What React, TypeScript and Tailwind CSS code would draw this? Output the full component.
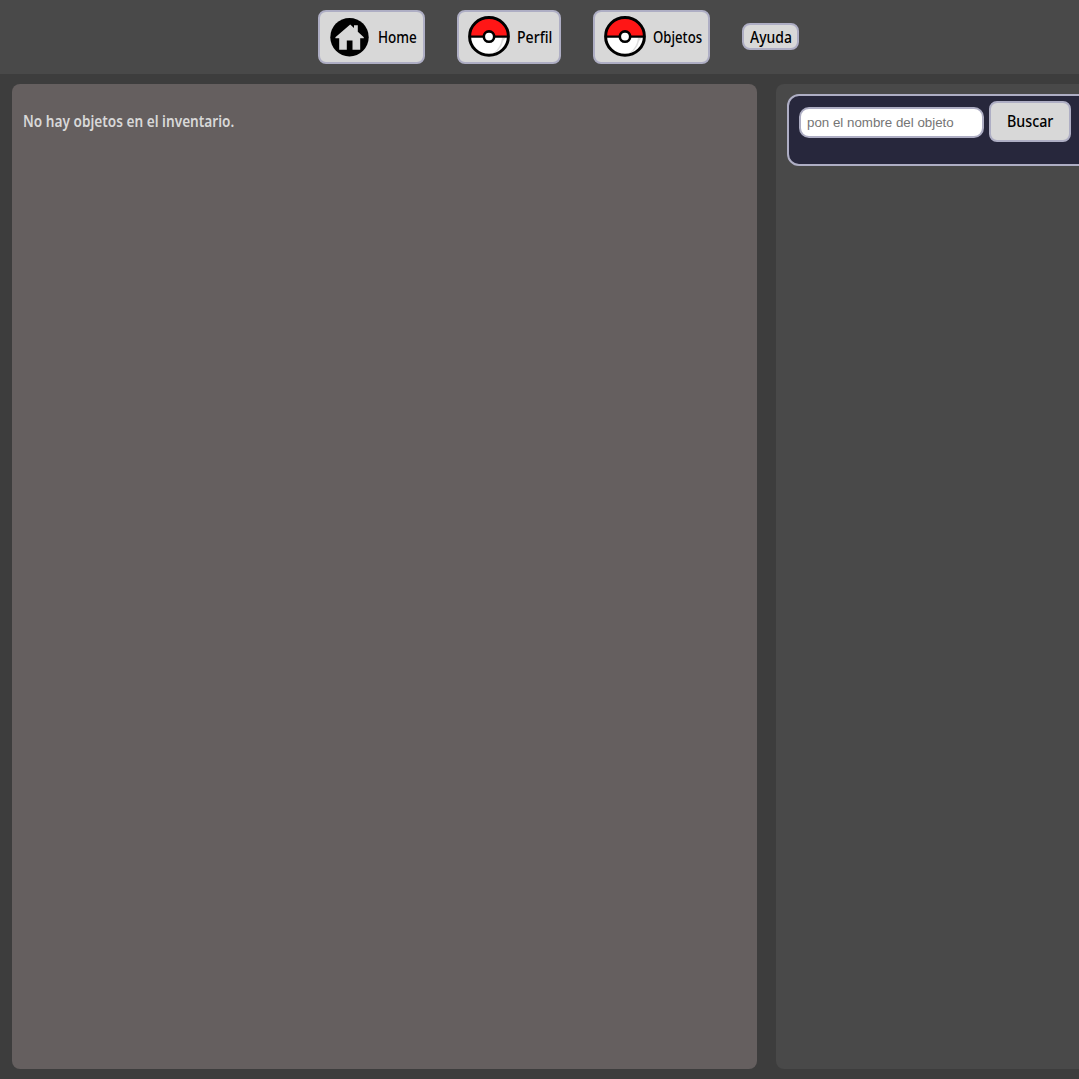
import type { ReactNode } from "react";

function HomeIcon() {
  return (
    <svg viewBox="0 0 50 50" className="size-[50px] shrink-0">
      <circle cx="24.5" cy="25.2" r="19.2" fill="#000" />
      <path
        d="M25.2 12.6 29 16.1V13.2H32.8V19.8L38.8 25.2V26.2H35.2V37.8H27.5V28.4H21.8V37.8H14.2V26.2H10.4V25.2Z"
        fill="#d8d8d8"
      />
    </svg>
  );
}

function PokeballIcon() {
  return (
    <svg viewBox="0 0 50 50" className="size-[50px] shrink-0">
      <circle cx="25" cy="24.4" r="19.2" fill="#fff" />
      <path d="M39 29A17 17 0 0 1 25 43C33 40 37 34 38 25.5H42Z" fill="#dedede" />
      <path d="M5.8 24.4a19.2 19.2 0 0 1 38.4 0Z" fill="#ff1616" />
      <ellipse cx="25" cy="24.4" rx="19.4" ry="18.9" fill="none" stroke="#000" strokeWidth="3" />
      <path d="M5 24.6H45" stroke="#000" strokeWidth="2.4" />
      <circle cx="25" cy="24.6" r="5.2" fill="#fff" stroke="#000" strokeWidth="2.6" />
    </svg>
  );
}

function NavButton({ icon, className, children }: { icon?: ReactNode; className: string; children: ReactNode }) {
  return (
    <button
      className={`flex shrink-0 items-center rounded-lg border-2 border-[#aeaec4] bg-[#d8d8d8] text-[15.5px] leading-[23px] font-medium text-black ${className}`}
    >
      {icon}
      {children}
    </button>
  );
}

export default function App() {
  return (
    <div className="flex h-[1079px] w-full flex-col overflow-hidden bg-[#3d3d3d] font-['Noto_Sans','Open_Sans',sans-serif]">
      <nav className="flex h-[74px] shrink-0 items-center bg-[#494949] pl-[318px]">
        <NavButton icon={<HomeIcon />} className="mr-8 h-[54px] w-[107px] pl-[5px]">
          <span className="ml-[3px] origin-left scale-x-[0.87]">Home</span>
        </NavButton>
        <NavButton icon={<PokeballIcon />} className="mr-8 h-[54px] w-[104px] pl-[5px]">
          <span className="ml-[3px] origin-left scale-x-[0.91]">Perfil</span>
        </NavButton>
        <NavButton icon={<PokeballIcon />} className="mr-8 h-[54px] w-[117px] pl-[5px]">
          <span className="ml-[3px] origin-left scale-x-[0.85]">Objetos</span>
        </NavButton>
        <NavButton className="mb-px h-[27px] w-[57px] pl-[6px]">
          <span className="mt-px origin-left scale-x-[0.9]">Ayuda</span>
        </NavButton>
      </nav>
      <main className="flex min-h-0 flex-1 gap-[19px] pt-[10px] pb-[10px] pl-3">
        <section className="w-[745px] shrink-0 rounded-lg bg-[#655f5f] px-[11px] pt-[25px]">
          <p className="origin-left scale-x-[0.88] text-[15.5px] leading-6 font-semibold whitespace-nowrap text-[#d8d8d8]">
            No hay objetos en el inventario.
          </p>
        </section>
        <section className="min-w-0 flex-1 overflow-hidden rounded-l-lg bg-[#494949] pt-[10px] pl-[11px]">
          <form className="flex h-[72px] w-[340px] items-start rounded-xl border-2 border-[#aeaec4] bg-[#27273c] pt-[5px] pl-[10px]">
            <input
              placeholder="pon el nombre del objeto"
              className="mt-[6px] h-[31px] w-[185px] shrink-0 rounded-[10px] border-2 border-[#aeaec4] bg-white px-[6px] font-['Liberation_Sans',sans-serif] text-[13.333px] placeholder:text-[#757575]"
            />
            <button
              type="button"
              className="ml-[5px] h-[41px] w-[82px] shrink-0 rounded-lg border-2 border-[#aeaec4] bg-[#d8d8d8] pt-px text-[15.5px] font-medium text-black"
            >
              <span className="inline-block scale-x-[0.92]">Buscar</span>
            </button>
          </form>
        </section>
      </main>
    </div>
  );
}
